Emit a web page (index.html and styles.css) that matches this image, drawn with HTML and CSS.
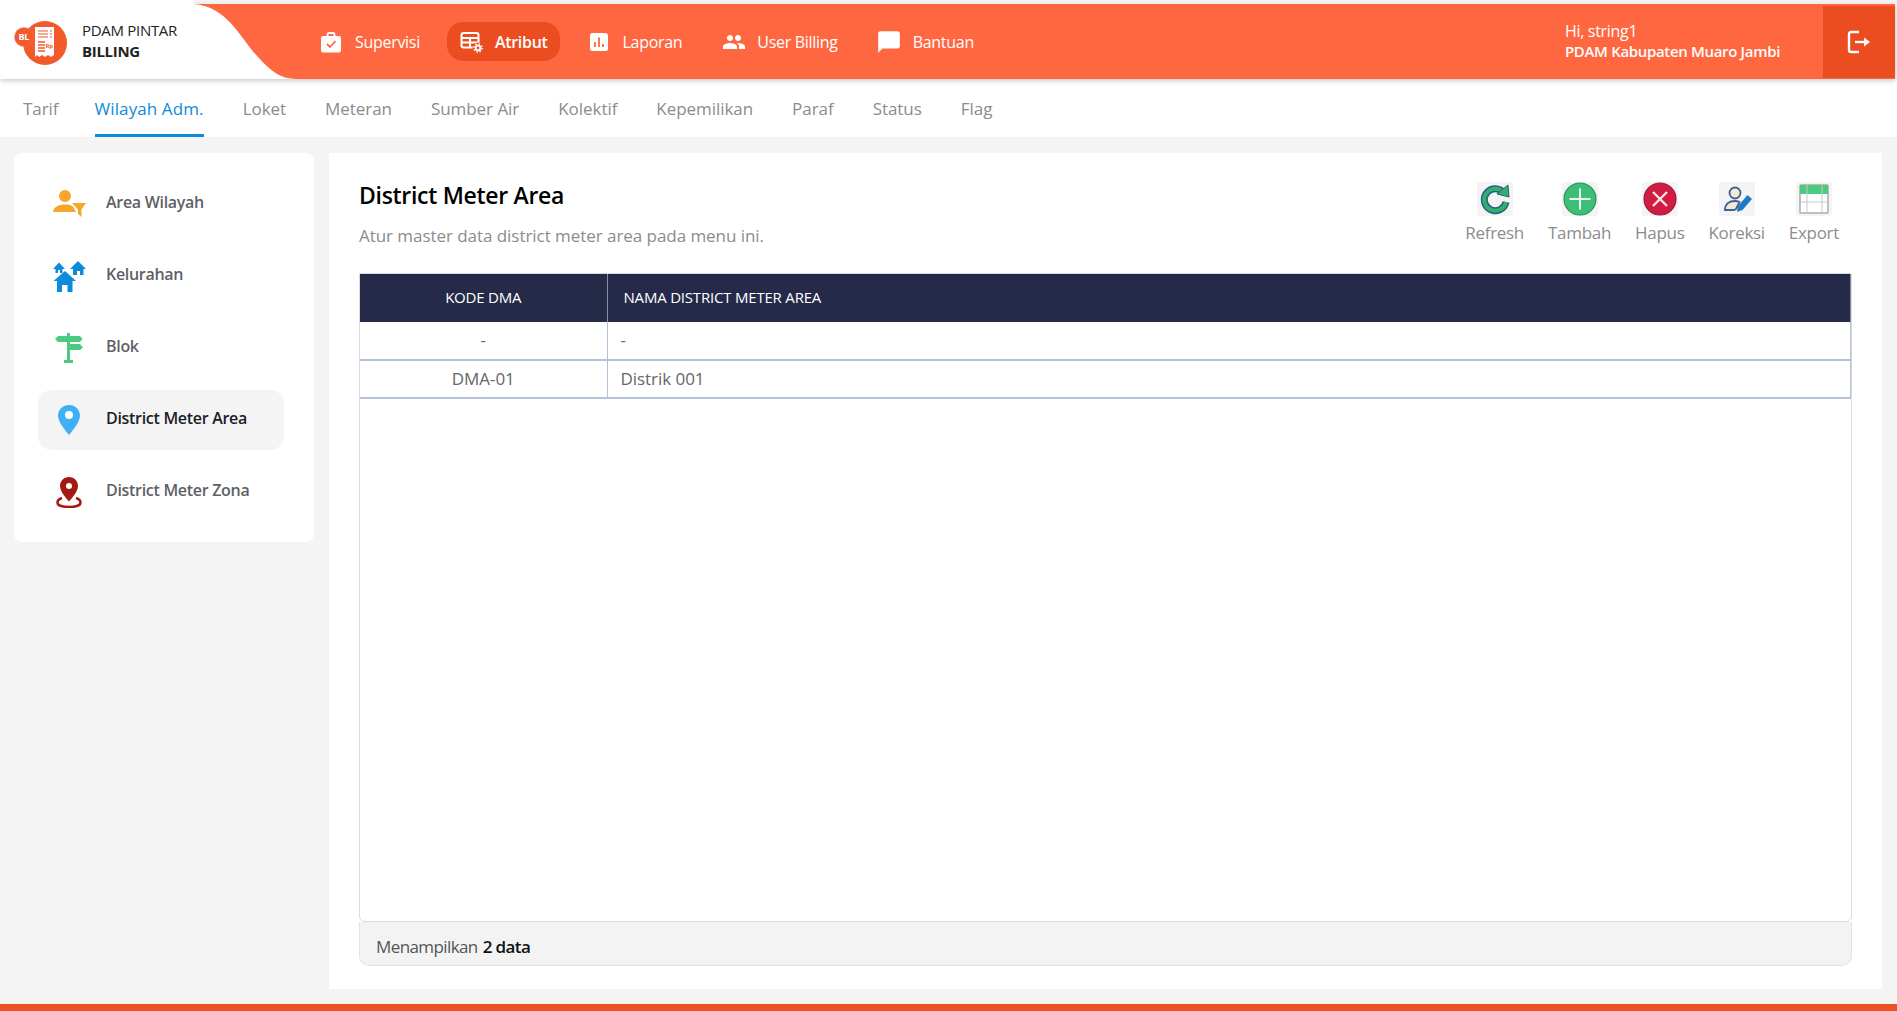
FILE: index.html
```html
<!DOCTYPE html>
<html lang="en">
<head>
    <meta charset="UTF-8">
    <meta name="viewport" content="width=device-width, initial-scale=1.0">
    <title>PDAM Pintar Billing - District Meter Area</title>
    <link rel="stylesheet" href="styles.css">
</head>
<body>
    <!-- Top bar -->
    <header class="topbar">
        <div class="brand">
            <svg class="brand-curve" viewBox="0 0 296 79" preserveAspectRatio="none"><path d="M0 0H194V4C228 7 240 38 258 57C270 70 280 79 296 79V79H0Z" fill="#fff"/></svg>
            <svg class="brand-logo" viewBox="0 0 60 50" width="60" height="50">
                <circle cx="33" cy="25" r="22" fill="#f2592b"/>
                <path d="M23 9H42V37L39 39L36 37L33 39L30 37L27 39L25 37L23 39Z" fill="#fff"/>
                <path d="M26 13H36M38 13H40M26 16H36M38 16H40M26 19H36M38 19H40" stroke="#f2592b" stroke-width="1.2"/>
                <path d="M26 24H33M26 27H33M26 30H33M26 33H33" stroke="#f2592b" stroke-width="1.5"/>
                <text x="33.500" y="30" class="logo-rp">Rp</text>
                <circle cx="12" cy="19" r="9.5" fill="#f2592b" stroke="#f47a55" stroke-width=".5"/>
                <text x="6.500" y="22" class="logo-bl">BL</text>
            </svg>
            <div class="brand-text">
                <span>PDAM PINTAR</span>
                <strong>BILLING</strong>
            </div>
        </div>

        <nav class="main-nav">
            <a class="nav-item nav-supervisi">
                <svg viewBox="0 0 22 24" width="22" height="24"><path d="M7.5 7V4.5C7.5 3.5 8 3 9 3H13C14 3 14.500 3.500 14.500 4.500V7" fill="none" stroke="#fff" stroke-width="1.800"/><rect x="1" y="6" width="20" height="16.500" rx="2" fill="#fff"/><path d="M7 14L10 17L15.500 11" fill="none" stroke="#ff6740" stroke-width="1.800"/></svg>
                Supervisi
            </a>
            <a class="nav-item nav-atribut active">
                <svg viewBox="0 0 24 24" width="24" height="24"><rect x="1.500" y="3" width="17" height="14.500" rx="2" fill="none" stroke="#fff" stroke-width="2"/><path d="M1.500 8H18.500M10 8V17.500M1.500 12.500H18.500" stroke="#fff" stroke-width="2"/><circle cx="18" cy="18" r="5.500" fill="#eb4d20"/><circle cx="18" cy="18" r="2.300" fill="none" stroke="#fff" stroke-width="1.800"/><circle cx="18" cy="18" r="4" fill="none" stroke="#fff" stroke-width="1.600" stroke-dasharray="1.500 1.640"/></svg>
                Atribut
            </a>
            <a class="nav-item nav-laporan">
                <svg viewBox="0 0 20 20" width="20" height="20"><rect x="1" y="1" width="18" height="18" rx="2.500" fill="#fff"/><path d="M6 15V10M10 15V5.500M14 15V12" stroke="#ff6740" stroke-width="1.800"/></svg>
                Laporan
            </a>
            <a class="nav-item nav-user">
                <svg viewBox="0 0 24 24" width="24" height="24"><path d="M16 11c1.660 0 2.990-1.340 2.990-3S17.660 5 16 5s-3 1.340-3 3 1.340 3 3 3zm-8 0c1.660 0 2.990-1.340 2.990-3S9.660 5 8 5 5 6.340 5 8s1.340 3 3 3zm0 2c-2.330 0-7 1.170-7 3.500V19h14v-2.500c0-2.330-4.670-3.500-7-3.500zm8 0c-.290 0-.620.020-.970.050 1.160.840 1.970 1.970 1.970 3.450V19h6v-2.500c0-2.330-4.670-3.500-7-3.500z" fill="#fff"/></svg>
                User Billing
            </a>
            <a class="nav-item nav-bantuan">
                <svg viewBox="0 0 24 24" width="26" height="26"><path d="M20 2H4c-1.100 0-2 .9-2 2v18l4-4h14c1.100 0 2-.9 2-2V4c0-1.100-.9-2-2-2z" fill="#fff"/></svg>
                Bantuan
            </a>
        </nav>

        <div class="user-info">
            <span>Hi, string1</span>
            <strong>PDAM Kabupaten Muaro Jambi</strong>
        </div>
        <a class="logout">
            <svg viewBox="0 0 24 26" width="24" height="26"><path d="M12 3H4C3 3 2 4 2 5V21C2 22 3 23 4 23H12" fill="none" stroke="#fff" stroke-width="2.400"/><path d="M8 13H18" stroke="#fff" stroke-width="2.400"/><path d="M17 8.500L23 13L17 17.500Z" fill="#fff"/></svg>
        </a>
    </header>

    <!-- Sub menu -->
    <nav class="tabs">
        <a class="tab">Tarif</a>
        <a class="tab active">Wilayah Adm.</a>
        <a class="tab">Loket</a>
        <a class="tab">Meteran</a>
        <a class="tab">Sumber Air</a>
        <a class="tab">Kolektif</a>
        <a class="tab">Kepemilikan</a>
        <a class="tab">Paraf</a>
        <a class="tab">Status</a>
        <a class="tab">Flag</a>
    </nav>

    <div class="page">
        <!-- Sidebar -->
        <aside class="sidebar">
            <a class="side-item">
                <svg viewBox="0 0 34 30" width="34" height="30"><circle cx="13" cy="7" r="6" fill="#f7a52b"/><path d="M1 23C1 18 7 15.500 13 15.500C16 15.500 19 16 21 17.500L24 23Z" fill="#f7a52b"/><path d="M20 14H34L29.500 20.500V28L26 25V20.500Z" fill="#f7a52b"/></svg>
                <span class="side-label">Area Wilayah</span>
            </a>
            <a class="side-item">
                <svg viewBox="0 0 34 32" width="34" height="32"><path d="M3.500 13v-4H1L7 2.500L13 9H10.500V13H8V10H6V13Z" fill="#0d8bdb"/><path d="M21 15V9H18L26 1L34 9H31.500V15H28V11H25V15Z" fill="#0d8bdb"/><path d="M5 32V21H1.500L13 11L24 21H20.500V32H15.500V25H10V32Z" fill="#0d8bdb"/></svg>
                <span class="side-label">Kelurahan</span>
            </a>
            <a class="side-item">
                <svg viewBox="0 0 30 32" width="30" height="32"><path d="M13 1H16V4H26L28.500 7L26 10H16V12H26L29 15.500L26 18H16V28H19V31H10V28H13V10H4L1 7L4 4H13Z" fill="#4ccb80"/></svg>
                <span class="side-label">Blok</span>
            </a>
            <a class="side-item active">
                <svg viewBox="0 0 24 32" width="24" height="32"><path d="M12 1C5.900 1 1 5.700 1 11.500C1 18 8 26 12 31C16 26 23 18 23 11.500C23 5.700 18.100 1 12 1Z" fill="#3fb0f3"/><circle cx="12" cy="11" r="4" fill="#fff"/></svg>
                <span class="side-label">District Meter Area</span>
            </a>
            <a class="side-item">
                <svg viewBox="0 0 26 32" width="26" height="32"><path d="M13 1C7.700 1 4 5 4 10C4 15.500 10 22 13 25.500C16 22 22 15.500 22 10C22 5 18.300 1 13 1Z" fill="#a21a12"/><circle cx="13" cy="10" r="3" fill="#fff"/><path d="M6 22C3 23 1.500 24.500 1.500 26.500C1.500 29.500 7 31 13 31C19 31 24.500 29.500 24.500 26.500C24.500 24.500 23 23 20 22" fill="none" stroke="#a21a12" stroke-width="2.500"/></svg>
                <span class="side-label">District Meter Zona</span>
            </a>
        </aside>

        <!-- Content -->
        <main class="content">
            <div class="content-head">
                <div class="title-block">
                    <h1>District Meter Area</h1>
                    <p>Atur master data district meter area pada menu ini.</p>
                </div>
                <div class="actions">
                    <a class="action action-refresh">
                        <span class="action-icon">
                            <svg viewBox="0 0 36 34" width="36" height="34"><path d="M27 11A11 11 0 1 0 29 20" fill="none" stroke="#2b5c8e" stroke-width="7"/><path d="M27 11A11 11 0 1 0 29 20" fill="none" stroke="#2fb267" stroke-width="4"/><path d="M20 12L31 3L32 15Z" fill="#2fb267" stroke="#2b5c8e"/></svg>
                        </span>
                        Refresh
                    </a>
                    <a class="action action-add">
                        <span class="action-icon">
                            <svg viewBox="0 0 36 34" width="36" height="34"><circle cx="18" cy="17" r="16" fill="#3dbe77" stroke="#2d8f5e" stroke-width="1.200"/><path d="M18 6.500V27.500M7.500 17H28.500" stroke="#e8f8ef" stroke-width="2"/></svg>
                        </span>
                        Tambah
                    </a>
                    <a class="action action-del">
                        <span class="action-icon">
                            <svg viewBox="0 0 36 34" width="36" height="34"><circle cx="18" cy="17" r="16" fill="#d01c43" stroke="#a51a3c" stroke-width="1.200"/><path d="M11 10L25 24M25 10L11 24" stroke="#f5e3e7" stroke-width="2.400"/></svg>
                        </span>
                        Hapus
                    </a>
                    <a class="action action-edit">
                        <span class="action-icon">
                            <svg viewBox="0 0 36 34" width="36" height="34"><circle cx="16" cy="11" r="5.500" fill="#f3e9d5" stroke="#3f6391" stroke-width="1.800"/><path d="M6 28C6 22 10 19 16 19C18 19 19.500 19.500 20.500 20L17 27L15 28Z" fill="#f3e9d5" stroke="#3f6391" stroke-width="1.800"/><path d="M18 30L19 24L28.500 13L33 17L23.500 28Z" fill="#1f7bc6"/></svg>
                        </span>
                        Koreksi
                    </a>
                    <a class="action action-export">
                        <span class="action-icon">
                            <svg viewBox="0 0 36 34" width="36" height="34"><rect x="4" y="3" width="28" height="28" rx="1" fill="#fff" stroke="#aaa" stroke-width="1.500"/><rect x="4" y="3" width="28" height="9" fill="#4ccb80"/><path d="M4 20H32M11 3V31M26 3V31" stroke="#c8c8c8"/></svg>
                        </span>
                        Export
                    </a>
                </div>
            </div>

            <div class="table-wrap">
                <table class="data-table">
                    <thead>
                        <tr>
                            <th class="col-code">KODE DMA</th>
                            <th class="col-name">NAMA DISTRICT METER AREA</th>
                        </tr>
                    </thead>
                    <tbody>
                        <tr>
                            <td class="col-code">-</td>
                            <td class="col-name">-</td>
                        </tr>
                        <tr>
                            <td class="col-code">DMA-01</td>
                            <td class="col-name">Distrik 001</td>
                        </tr>
                    </tbody>
                </table>
            </div>
            <div class="table-footer">Menampilkan <strong>2 data</strong></div>
        </main>
    </div>

    <div class="bottom-bar"></div>
</body>
</html>
```

FILE: styles.css
```css
* {
    box-sizing: border-box;
}

html, body {
    height: 100%;
}

body {
    margin: 0;
    display: flex;
    flex-direction: column;
    overflow: hidden;
    font-family: "Open Sans", Arial, sans-serif;
    letter-spacing: -0.3px;
    background-color: #f4f4f4;
    color: #333;
}

/* Top bar */
.topbar {
    position: relative;
    z-index: 2;
    display: flex;
    align-items: center;
    height: 75px;
    margin: 4px 2px 0 0;
    background-color: #ff6740;
    box-shadow: 0 2px 5px rgba(0,0,0,0.2);
    color: #fff;
}

.brand {
    position: relative;
    display: flex;
    align-items: center;
    flex: 0 0 296px;
    height: 75px;
    padding-left: 12px;
}

.brand-curve {
    position: absolute;
    left: 0;
    top: -4px;
    width: 296px;
    height: 79px;
}

.brand-logo {
    position: relative;
    margin-top: 2px;
}

.logo-bl {
    font-size: 9px;
    font-weight: 700;
    fill: #fff;
}

.logo-rp {
    font-size: 6px;
    font-weight: 700;
    fill: #f2592b;
}

.brand-text {
    position: relative;
    display: flex;
    flex-direction: column;
    gap: 1px;
    margin: -2px 0 0 10px;
    font-size: 15px;
    color: #222;
}

.brand-text strong {
    font-weight: 700;
}

.main-nav {
    display: flex;
    align-items: center;
    gap: 15px;
    margin-left: 11px;
}

.nav-item {
    display: flex;
    align-items: center;
    gap: 13px;
    height: 39px;
    padding: 0 12px 0 13px;
    border-radius: 16px;
    font-size: 16px;
}

.nav-item.active {
    gap: 11px;
    background-color: #eb4d20;
    font-weight: 600;
}

.nav-laporan {
    gap: 14px;
    margin-left: 1px;
}

.nav-user {
    gap: 11px;
}

.nav-bantuan {
    gap: 11px;
    margin-left: -2px;
}

.user-info {
    display: flex;
    flex-direction: column;
    margin: -2px 0 0 auto;
    font-size: 16px;
    line-height: 20px;
}

.user-info strong {
    font-size: 15px;
    font-weight: 600;
    letter-spacing: -0.33px;
}

.logout {
    display: flex;
    align-items: center;
    justify-content: center;
    width: 72px;
    height: 72px;
    margin-left: 43px;
    background-color: #eb4d20;
}

/* Sub menu */
.tabs {
    display: flex;
    gap: 39px;
    height: 58px;
    padding-left: 23px;
    background-color: #fff;
}

.tab {
    display: flex;
    align-items: center;
    padding-top: 4px;
    border-bottom: 3px solid transparent;
    font-size: 17px;
    letter-spacing: -0.05px;
    color: #8c8c8c;
}

.tab:first-child {
    margin-right: -3px;
}

.tab.active {
    border-bottom-color: #0d8bdb;
    letter-spacing: 0.1px;
    color: #0d8bdb;
}

/* Page body */
.page {
    display: flex;
    flex: 1;
    align-items: flex-start;
    gap: 15px;
    min-height: 0;
    padding: 16px 15px 15px 14px;
}

.sidebar {
    display: flex;
    flex-direction: column;
    gap: 12px;
    flex: 0 0 300px;
    padding: 21px 30px 20px 24px;
    border-radius: 8px;
    background-color: #fff;
}

.side-item {
    display: flex;
    align-items: center;
    height: 60px;
    padding-left: 14px;
    border-radius: 14px;
    font-size: 16px;
    font-weight: 600;
    color: #5f5f66;
}

.side-label {
    margin-bottom: 4px;
}

.side-item svg {
    flex: none;
    margin-right: 20px;
}

.side-item:nth-child(3) svg {
    margin: 0 22px 0 2px;
}

.side-item:nth-child(4) svg {
    margin: 0 25px 0 5px;
}

.side-item:nth-child(5) svg {
    margin: 0 24px 0 4px;
}

.side-item.active {
    background-color: #f4f4f4;
    color: #1c1c28;
}

.content {
    display: flex;
    flex-direction: column;
    flex: 1;
    align-self: stretch;
    min-width: 0;
    padding: 24px 30px 23px;
    background-color: #fff;
}

.content-head {
    display: flex;
    justify-content: space-between;
    height: 96px;
}

.title-block h1 {
    margin: 0;
    font-size: 23px;
    line-height: 36px;
    font-weight: 600;
    color: #000;
}

.title-block p {
    margin: 12px 0 0;
    font-size: 17px;
    line-height: 22px;
    letter-spacing: -0.05px;
    color: #8c8c8c;
}

.actions {
    display: flex;
    gap: 24px;
    margin-right: 13px;
}

.action {
    display: flex;
    flex-direction: column;
    align-items: center;
    gap: 6px;
    margin-top: 5px;
    font-size: 17px;
    line-height: 22px;
    color: #8c8c8c;
}

.action-icon {
    display: block;
    width: 36px;
    height: 34px;
    border-radius: 3px;
    background-color: #f4f4f4;
}

.action-icon svg {
    display: block;
}

.table-wrap {
    flex: 1;
    min-height: 0;
    border: 1px solid #d5dae5;
    border-radius: 0 0 6px 6px;
}

.data-table {
    width: 100%;
    border-collapse: collapse;
    table-layout: fixed;
}

.data-table .col-code {
    width: 247px;
    text-align: center;
}

.data-table .col-name {
    text-align: left;
}

.data-table th {
    height: 48px;
    padding: 0 16px 2px;
    background-color: #252a49;
    border-right: 1px solid #8a8d9f;
    font-size: 15px;
    font-weight: 500;
    letter-spacing: -0.2px;
    color: #fff;
}

.data-table td {
    height: 38px;
    padding: 0 13px 2px;
    border-right: 1px solid #b4c1d6;
    border-bottom: 2px solid #b4c1d6;
    font-size: 17px;
    letter-spacing: -0.05px;
    color: #666;
}

.table-footer {
    display: flex;
    align-items: center;
    gap: 5px;
    height: 44px;
    padding: 5px 0 0 16px;
    border: 1px solid #dfe3ed;
    border-top: none;
    border-radius: 0 0 10px 10px;
    background-color: #f3f3f3;
    font-size: 17px;
    letter-spacing: -0.6px;
    color: #555;
}

.table-footer strong {
    font-weight: 600;
    color: #111;
}

.bottom-bar {
    flex: none;
    height: 7px;
    background-color: #ee4f23;
}
```
